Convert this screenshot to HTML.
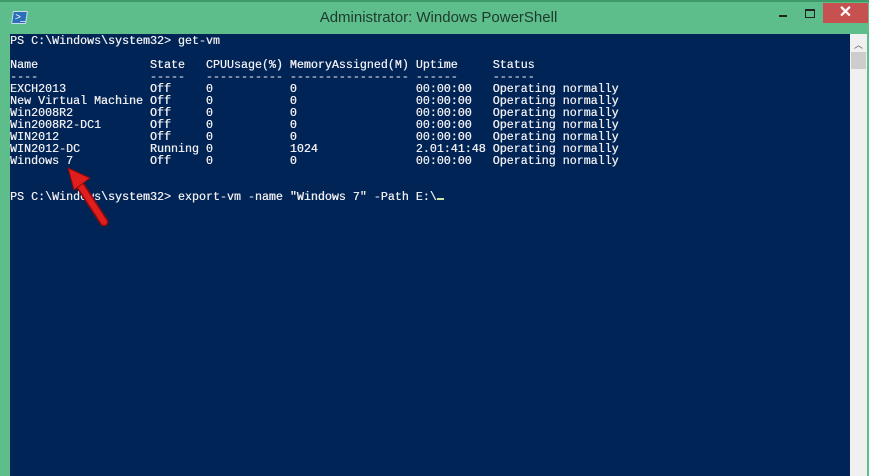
<!DOCTYPE html>
<html><head><style>
body{margin:0;width:869px;height:476px;overflow:hidden;background:#5dbe8c;position:relative;font-family:"Liberation Sans",sans-serif}
.top{position:absolute;left:0;top:0;width:869px;height:2px;background:#3f9a6a}
.title{position:absolute;left:0;top:9px;width:869px;text-align:center;font-size:15px;color:#1e3a2b;padding-left:8px;box-sizing:border-box}
.close{position:absolute;left:823px;top:3px;width:45px;height:20px;background:#c75050;color:#fff;text-align:center;font-size:16px;line-height:20px;font-weight:bold}
.min{position:absolute;left:779px;top:15px;width:8px;height:2px;background:#222}
.max{position:absolute;left:805px;top:9px;width:8px;height:6px;border:1px solid #222;border-top-width:2px}
.icon{position:absolute;left:12px;top:11px;width:15px;height:13px;background:#2a6fb8;border:1px solid #cde;border-radius:1px;color:#fff;font-size:10px;line-height:12px;padding-left:2px;box-sizing:border-box;transform:skewX(-8deg)}
.con{position:absolute;left:10px;top:34px;width:840px;height:442px;background:#012456}
pre{margin:0;padding-top:1px;font-family:"Liberation Mono",monospace;font-size:11.67px;line-height:12px;color:#eeedf0;white-space:pre;text-shadow:0.3px 0 0 #eeedf0}
.cur{display:inline-block;width:7px;height:2px;background:#c9e6a8;vertical-align:baseline}
.sb{position:absolute;left:850px;top:34px;width:17px;height:442px;background:#f0f0f0}
.thumb{position:absolute;left:851px;top:52px;width:15px;height:17px;background:#cdcdcd}
.arr{position:absolute;left:854px;top:38px;font-size:9px;color:#555}
</style></head><body>
<div class="top"></div>
<div class="icon">&gt;_</div>
<div class="title">Administrator: Windows PowerShell</div>
<div class="min"></div><div class="max"></div>
<div class="close">✕</div>
<div class="con"><pre>PS C:\Windows\system32&gt; get-vm

Name                State   CPUUsage(%) MemoryAssigned(M) Uptime     Status
----                -----   ----------- ----------------- ------     ------
EXCH2013            Off     0           0                 00:00:00   Operating normally
New Virtual Machine Off     0           0                 00:00:00   Operating normally
Win2008R2           Off     0           0                 00:00:00   Operating normally
Win2008R2-DC1       Off     0           0                 00:00:00   Operating normally
WIN2012             Off     0           0                 00:00:00   Operating normally
WIN2012-DC          Running 0           1024              2.01:41:48 Operating normally
Windows 7           Off     0           0                 00:00:00   Operating normally


PS C:\Windows\system32&gt; export-vm -name "Windows 7" -Path E:\<span class="cur"></span></pre></div>
<div class="sb"></div><div class="thumb"></div><div class="arr">︿</div>
<svg style="position:absolute;left:0;top:0" width="869" height="476">
<path d="M104 222 L78 182" stroke="#8b0a0a" stroke-width="9" stroke-linecap="round"/>
<path d="M104 222 L78 182" stroke="#e01e1e" stroke-width="6" stroke-linecap="round"/>
<polygon points="68,168 90,178 74,190" fill="#e01e1e" stroke="#8b0a0a" stroke-width="1"/>
</svg>
</body></html>
